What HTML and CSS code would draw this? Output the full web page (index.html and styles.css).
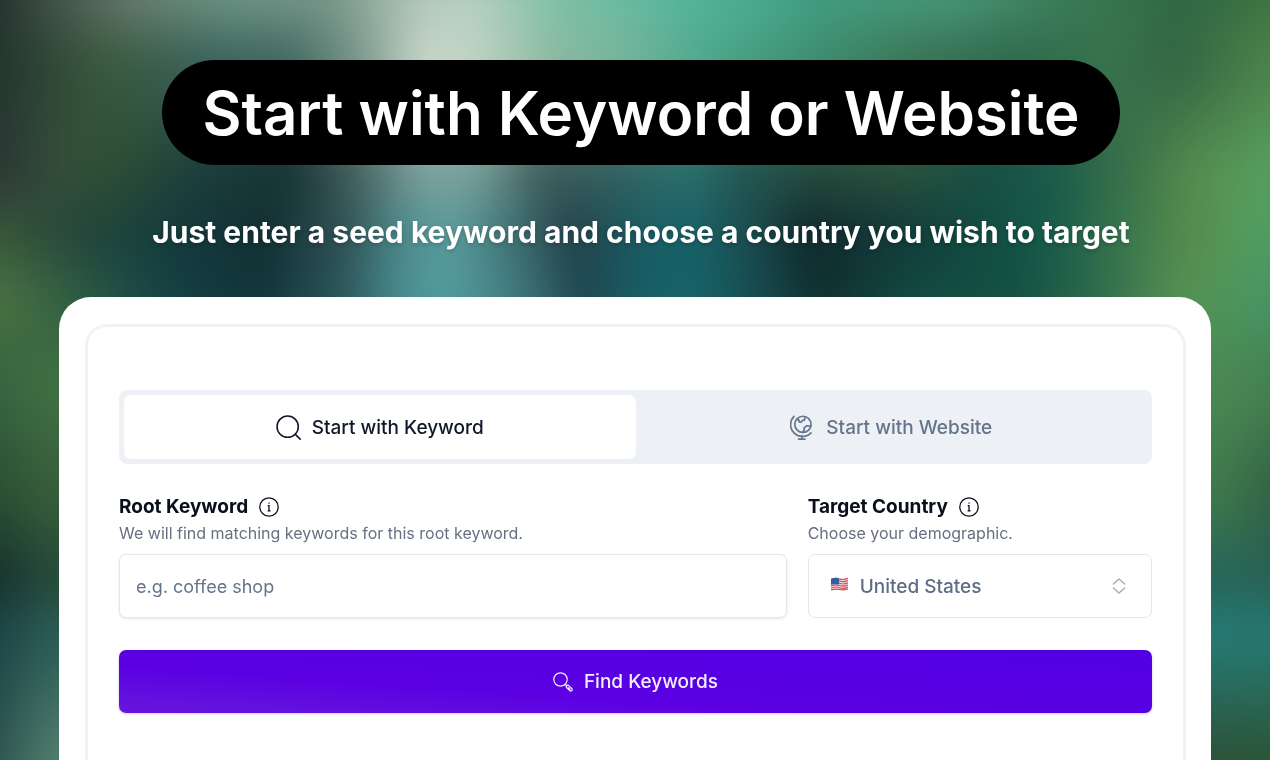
FILE: index.html
```html
<!DOCTYPE html>
<html lang="en">
<head>
<meta charset="utf-8">
<meta name="viewport" content="width=device-width, initial-scale=1">
<title>Start with Keyword or Website</title>
<link rel="stylesheet" href="styles.css">
</head>
<body>
<div class="backdrop" aria-hidden="true">
  <div class="band band-1"></div>
  <div class="band band-2"></div>
  <div class="band band-3"></div>
  <div class="band band-4"></div>
  <div class="band band-5"></div>
  <div class="band band-6"></div>
  <div class="band band-7"></div>
  <div class="band band-8"></div>
  <div class="band band-9"></div>
  <div class="band band-10"></div>
</div>
<main class="page">
  <header class="hero">
    <h1 class="title">Start with Keyword or Website</h1>
    <p class="subtitle">Just enter a seed keyword and choose a country you wish to target</p>
  </header>
  <section class="sheet">
    <form class="panel">
      <div class="tabs" role="tablist">
        <button class="tab tab-active" type="button" role="tab" aria-selected="true">
          <svg class="icon-lg" viewBox="0 0 24 24" fill="none" stroke="currentColor" stroke-width="1.5" stroke-linecap="round"><circle cx="11.2" cy="11.2" r="10.2"/><path d="M18.6 18.6 23.2 23.2"/></svg>
          <span>Start with Keyword</span>
        </button>
        <button class="tab" type="button" role="tab" aria-selected="false">
          <svg class="icon-lg" viewBox="0 0 24 24" fill="none" stroke="currentColor" stroke-width="1.6" stroke-linecap="round" stroke-linejoin="round"><circle cx="12.400" cy="9" r="7.800"/><path d="M3.800 1.300A11 11 0 0 0 20.200 17.200M11.300 19.800v3.200M8.300 23.200h6M6.800 3.800l1.900 1.200-.2 1.500 1.900.5 1.500-1.800 2-.2.500-2.600M20 10.600l-4.200-.1-2.300 1.800.3 1.800-1.600 2.300"/></svg>
          <span>Start with Website</span>
        </button>
      </div>
      <div class="fields">
        <div class="field">
          <div class="label-row">
            <label class="label" for="keyword">Root Keyword</label>
            <svg class="icon-info" viewBox="0 0 20 20" fill="none" stroke="currentColor" stroke-width="1.3"><circle cx="10" cy="10" r="9.200"/><path d="M8.700 8.600H10v5M8.600 13.800h2.900M9.400 6.200h1.200"/></svg>
          </div>
          <p class="hint">We will find matching keywords for this root keyword.</p>
          <input class="control" id="keyword" type="text" placeholder="e.g. coffee shop">
        </div>
        <div class="field">
          <div class="label-row">
            <label class="label" for="country">Target Country</label>
            <svg class="icon-info" viewBox="0 0 20 20" fill="none" stroke="currentColor" stroke-width="1.3"><circle cx="10" cy="10" r="9.200"/><path d="M8.700 8.600H10v5M8.600 13.800h2.900M9.400 6.200h1.200"/></svg>
          </div>
          <p class="hint">Choose your demographic.</p>
          <div class="select-wrap">
            <select class="control select" id="country"><option>United States</option></select>
            <svg class="flag" viewBox="0 0 18 14"><path fill="#f3e4e6" d="M.5 2Q5 .5 9 1.500T17.500 1v11q-4.500 1.500-8.500 0T.5 13z"/><path fill="none" stroke="#d5414d" stroke-width="1.1" d="M.5 2.300Q5 .7 9 2t8.500-.7M.5 4.500q4.500-2 8.500-.5t8.500-.5M.5 6.800q4.500-2 8.500-.5t8.500-.5M.5 9q4.500-2 8.500-.5t8.500-.5M.5 11.200q4.500-2 8.500-.5t8.500-.5M.5 13q4.500-1.500 8.500-.5t8.500-.5"/><path fill="#2f5fa6" d="M.5 2Q5 0 8.500 1.400v6.200Q5 6.200.5 7.800z"/></svg>
            <svg class="chevrons" viewBox="0 0 14 16" fill="none" stroke="currentColor" stroke-width="1.4" stroke-linecap="round" stroke-linejoin="round"><path d="m1.300 6 5.700-5 5.700 5M1.300 10l5.700 5 5.700-5"/></svg>
          </div>
        </div>
      </div>
      <button class="submit" type="button">
        <svg class="icon-md" viewBox="0 0 20 20" fill="none" stroke="currentColor" stroke-width="1.2" stroke-linecap="round" stroke-linejoin="round"><circle cx="7.500" cy="7.500" r="6.700"/><path d="m12.200 12.300 1.600 1.500M13.500 13.700c.8-.8 1.800-.6 2.500.1l2.700 2.700c1.500 1.600-.6 3.400-2 2l-2.900-2.700c-.7-.7-.9-1.400-.3-2.100zM15.500 15.700l1.500 1.400"/></svg>
        <span>Find Keywords</span>
      </button>
    </form>
  </section>
</main>
</body>
</html>
```
FILE: styles.css
```css
* { box-sizing: border-box; }
body {
  margin: 0;
  min-height: 100vh;
  display: flex;
  background: #1d4440;
  font-family: Inter, "Liberation Sans", sans-serif;
  color: #0a0f1c;
  overflow: hidden;
}
h1, p { margin: 0; }
button, input, select { font: inherit; }
svg { flex: none; display: block; }

/* Blurred backdrop: horizontal colour rows that fade into each other */
.backdrop { position: fixed; inset: -28px; z-index: -1; filter: blur(14px); }
.band {
  position: absolute;
  inset: 0;
  -webkit-mask-image: linear-gradient(transparent var(--from), #000 var(--to));
  mask-image: linear-gradient(transparent var(--from), #000 var(--to));
}
.band-1 {
  -webkit-mask-image: none;
  mask-image: none;
  background: linear-gradient(90deg, #26332f 2%, #4a594e 7%, #667b6c 12%, #6a9484 19%, #78978a 27%, #b3c9b8 34%, #b4d0be 38%, #7fc2a8 44%, #58b79b 53%, #4caf91 58%, #429c80 64%, #479777 74%, #3b7a56 83%, #2f6945 91%, #3c7042 97%, #4a7a42);
}
.band-2 {
  --from: 3%; --to: 11%;
  background: linear-gradient(90deg, #24362f 2%, #3a5a3e 10%, #3a6058 17%, #41675f 24%, #78948a 29%, #c8d6c9 34%, #c6d6c8 37%, #8cb8a0 44%, #78b39d 49%, #4fa88d 55%, #3f8f72 63%, #3a7355 71%, #2f684c 79%, #38734d 86%, #356544 91%, #4b8049 97%, #508a4f);
}
.band-3 {
  --from: 12%; --to: 24%;
  background: linear-gradient(90deg, #2d3634 2%, #34503a 7%, #2d4e33 11%, #1d3f3c 17%, #173335 24%, #476260 29%, #7fa39f 34%, #7a9f9a 38%, #3f5e5c 43%, #35605f 48%, #2d706c 54%, #235753 58%, #264c3d 64%, #2b523d 70%, #175045 77%, #1d5c4b 82%, #3f7549 88%, #548c4e 92%, #57a05f 98%);
}
.band-4 {
  --from: 24%; --to: 32%;
  background: linear-gradient(90deg, #38583a 2%, #29483a 7%, #1c433c 11%, #153a3d 16%, #122f32 22%, #305154 28%, #4a8688 32%, #5b9d9d 36%, #44797b 40%, #24424a 45%, #1b5a60 50%, #17636a 54%, #1c4a4c 59%, #10292d 63%, #133537 68%, #12483f 75%, #165a49 81%, #3a774d 87%, #578c4c 92%, #549c5d 96%, #489f68);
}
.band-5 {
  --from: 32%; --to: 40%;
  background: linear-gradient(90deg, #4a7142 2%, #386442 6%, #205046 11%, #154044 15%, #11353a 22%, #2c585d 28%, #4d9397 33%, #529ca0 36%, #427a7f 41%, #1e4650 46%, #186068 51%, #176268 55%, #15464a 60%, #10302f 64%, #124a41 71%, #145144 79%, #2f6c4c 85%, #579052 91%, #4f9458 94%, #459567 98%);
}
.band-6 { --from: 41%; --to: 50%; background: linear-gradient(90deg, #356440 2%, #417043 6%, #4a8853 94%, #448052 98%); }
.band-7 { --from: 52%; --to: 63%; background: linear-gradient(90deg, #2b4f34 2%, #385e3a 6%, #3f7a4b 94%, #336245 98%); }
.band-8 { --from: 64%; --to: 74%; background: linear-gradient(90deg, #17322f 2%, #264a38 6%, #27655a 94%, #286154 98%); }
.band-9 { --from: 74%; --to: 81%; background: linear-gradient(90deg, #1e4648 2%, #2c5c56 6%, #257a74 94%, #287870 98%); }
.band-10 { --from: 82%; --to: 97%; background: linear-gradient(90deg, #2f5650 2%, #53806f 6%, #2d5036 94%, #2b5434 98%); }

.page {
  flex: 1;
  display: flex;
  flex-direction: column;
  padding: 60px 59px 0;
}
.hero {
  display: flex;
  flex-direction: column;
  align-items: center;
  gap: 44px;
  padding: 0 0 42px 12px;
  color: #fff;
  text-align: center;
}
.title {
  padding: 13px 40px 12px;
  border-radius: 53px;
  background: #000;
  font-size: 60px;
  font-weight: 600;
  line-height: 80px;
}
.subtitle {
  font-size: 30px;
  font-weight: 700;
  line-height: 46px;
  text-shadow: 0 2px 4px rgb(0 0 0 / 20%);
}
.sheet {
  flex: 1;
  display: flex;
  padding: 27px 25px 0 26px;
  border-radius: 32px 32px 0 0;
  background: #fff;
}
.panel {
  flex: 1;
  display: flex;
  flex-direction: column;
  gap: 32px;
  padding: 63px 31px 48px;
  border: 3px solid #f1f2f6;
  border-bottom: 0;
  border-radius: 22px 22px 0 0;
}
.tabs {
  display: grid;
  grid-template-columns: 1fr 1fr;
  padding: 5px;
  border-radius: 8px;
  background: #edf0f5;
}
.tab {
  display: flex;
  align-items: center;
  justify-content: center;
  gap: 11px;
  height: 64px;
  border: 0;
  border-radius: 7px;
  background: transparent;
  color: #64748b;
  font-size: 19px;
  font-weight: 500;
}
.tab-active { background: #fff; color: #0f1729; }
.icon-lg { width: 25px; height: 25px; }
.fields {
  display: grid;
  grid-template-columns: 667fr 344fr;
  gap: 21px;
}
.field { min-width: 0; }
.label-row { display: flex; align-items: center; gap: 11px; height: 21px; }
.label { font-size: 19px; font-weight: 700; }
.icon-info { width: 20px; height: 20px; }
.hint {
  margin: 4px 0 9px;
  color: #677080;
  font-size: 16px;
  font-weight: 400;
  line-height: 24px;
}
.control {
  display: block;
  width: 100%;
  height: 64px;
  padding: 0 16px;
  border: 1px solid #e1e6ef;
  border-radius: 7px;
  background: #fff;
  box-shadow: 0 1px 3px rgb(15 23 42 / 10%);
  color: #5d6d86;
  font-size: 18px;
}
.control::placeholder { color: #64748b; opacity: 1; }
.select-wrap { position: relative; }
.select { appearance: none; padding-left: 51px; box-shadow: none; font-size: 19px; font-weight: 500; }
.flag { position: absolute; left: 22px; top: 23px; width: 19px; height: 14px; }
.chevrons { position: absolute; right: 26px; top: 24px; width: 14px; height: 16px; color: #a3acba; }
.submit {
  display: flex;
  align-items: center;
  justify-content: center;
  gap: 11px;
  height: 63px;
  border: 0;
  border-radius: 7px;
  background: linear-gradient(184deg, #5000e4, #5c00e2 65%, #6212de 90%, #6715dd);
  box-shadow: 0 1px 3px rgb(0 0 0 / 20%);
  color: #f3edff;
  font-size: 19px;
  font-weight: 500;
}
.icon-md { width: 20px; height: 20px; }
```
